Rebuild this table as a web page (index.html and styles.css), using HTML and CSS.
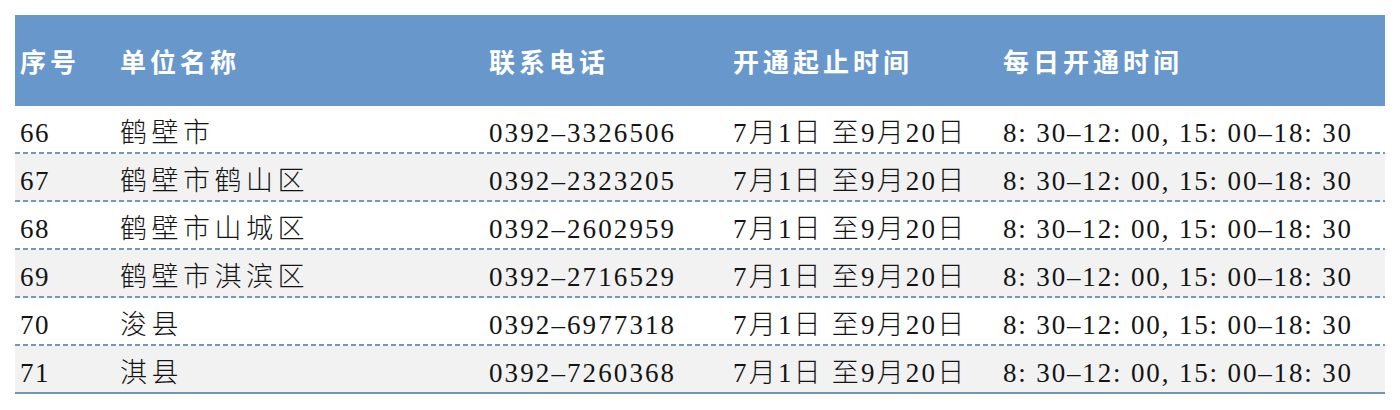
FILE: index.html
```html
<!DOCTYPE html>
<html lang="zh-CN">
<head>
<meta charset="utf-8">
<title>开通时间表</title>
<link rel="stylesheet" href="styles.css">
</head>
<body>
<div class="table">
  <div class="row head">
    <div class="cell">序号</div>
    <div class="cell">单位名称</div>
    <div class="cell">联系电话</div>
    <div class="cell">开通起止时间</div>
    <div class="cell">每日开通时间</div>
  </div>
  <div class="row">
    <div class="cell num">66</div>
    <div class="cell name">鹤壁市</div>
    <div class="cell phone">0392–3326506</div>
    <div class="cell date">7月1日 至9月20日</div>
    <div class="cell time">8: 30–12: 00, 15: 00–18: 30</div>
  </div>
  <div class="row alt">
    <div class="cell num">67</div>
    <div class="cell name">鹤壁市鹤山区</div>
    <div class="cell phone">0392–2323205</div>
    <div class="cell date">7月1日 至9月20日</div>
    <div class="cell time">8: 30–12: 00, 15: 00–18: 30</div>
  </div>
  <div class="row">
    <div class="cell num">68</div>
    <div class="cell name">鹤壁市山城区</div>
    <div class="cell phone">0392–2602959</div>
    <div class="cell date">7月1日 至9月20日</div>
    <div class="cell time">8: 30–12: 00, 15: 00–18: 30</div>
  </div>
  <div class="row alt">
    <div class="cell num">69</div>
    <div class="cell name">鹤壁市淇滨区</div>
    <div class="cell phone">0392–2716529</div>
    <div class="cell date">7月1日 至9月20日</div>
    <div class="cell time">8: 30–12: 00, 15: 00–18: 30</div>
  </div>
  <div class="row">
    <div class="cell num">70</div>
    <div class="cell name">浚县</div>
    <div class="cell phone">0392–6977318</div>
    <div class="cell date">7月1日 至9月20日</div>
    <div class="cell time">8: 30–12: 00, 15: 00–18: 30</div>
  </div>
  <div class="row alt last">
    <div class="cell num">71</div>
    <div class="cell name">淇县</div>
    <div class="cell phone">0392–7260368</div>
    <div class="cell date">7月1日 至9月20日</div>
    <div class="cell time">8: 30–12: 00, 15: 00–18: 30</div>
  </div>
</div>
</body>
</html>
```

FILE: styles.css
```css
html, body {
  margin: 0;
  padding: 0;
  background: #ffffff;
}

body {
  padding: 15px;
}

.table {
  width: 1370px;
  display: flex;
  flex-direction: column;
}

.row {
  display: grid;
  grid-template-columns: 100px 369px 244px 270px 387px;
  align-items: center;
  box-sizing: border-box;
  height: 48px;
  padding-top: 8px;
  padding-bottom: 2px;
  font-family: "Liberation Serif", "Noto Sans CJK SC", serif;
  font-weight: 300;
  font-size: 27px;
  line-height: 30px;
  color: #141414;
  background-color: #ffffff;
  background-image: repeating-linear-gradient(to right, #7199bd 0 5px, transparent 5px 8px);
  background-repeat: no-repeat;
  background-size: 100% 2px;
  background-position: left bottom;
}

.row.alt {
  background-color: #f2f2f2;
}

.row.last {
  background-image: linear-gradient(#6e96ba, #6e96ba);
}

.cell {
  padding-left: 5px;
  white-space: nowrap;
}

.row.head {
  height: 91px;
  padding: 0;
  background: #6897cc;
  color: #ffffff;
  font-family: "Noto Sans CJK SC", "Noto Sans", sans-serif;
  font-weight: 700;
  font-size: 26px;
  letter-spacing: 4px;
}

.num {
  letter-spacing: 1.5px;
}

.name {
  letter-spacing: 4.5px;
}

.phone {
  letter-spacing: 2.1px;
}

.date {
  letter-spacing: 2.2px;
}

.time {
  letter-spacing: 1.85px;
}
```
